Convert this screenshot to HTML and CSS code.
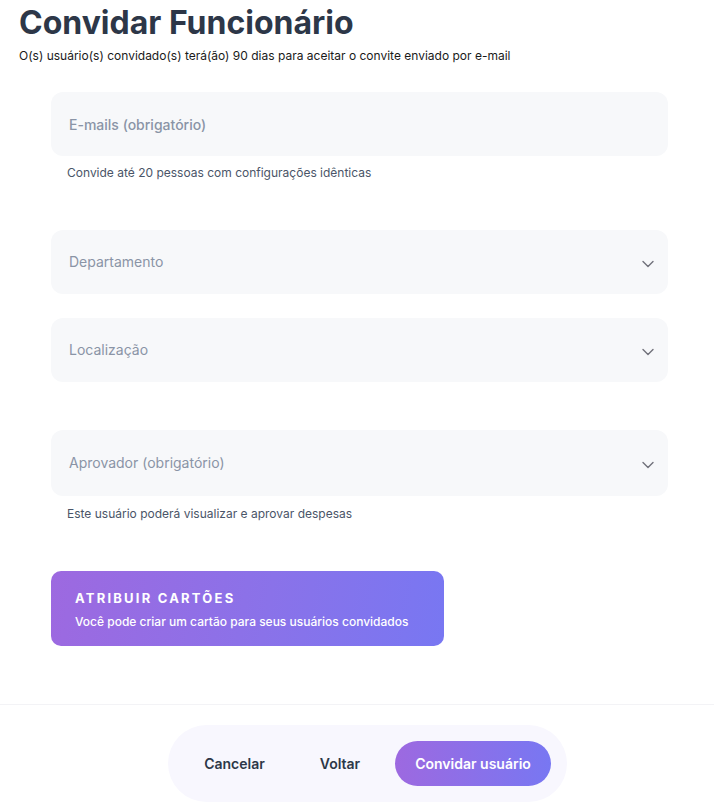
FILE: index.html
```html
<!DOCTYPE html>
<html lang="pt-BR">
<head>
    <meta charset="UTF-8">
    <title>Convidar Funcionário</title>
    <link rel="stylesheet" href="styles.css">
</head>
<body>
    <div class="page">
        <h1 class="title">Convidar Funcionário</h1>
        <p class="subtitle">O(s) usuário(s) convidado(s) terá(ão) 90 dias para aceitar o convite enviado por e-mail</p>

        <form class="form">
            <div class="group emails">
                <div class="field">
                    <span class="placeholder strong">E-mails (obrigatório)</span>
                </div>
                <p class="hint">Convide até 20 pessoas com configurações idênticas</p>
            </div>

            <div class="group selects">
                <div class="field select">
                    <span class="placeholder">Departamento</span>
                    <svg class="chevron" viewBox="0 0 20 20" width="20" height="20"><path d="M5 7.5l5 5 5-5" fill="none" stroke="#71717a" stroke-width="1.4" stroke-linecap="round" stroke-linejoin="round"/></svg>
                </div>
                <div class="field select">
                    <span class="placeholder">Localização</span>
                    <svg class="chevron" viewBox="0 0 20 20" width="20" height="20"><path d="M5 7.5l5 5 5-5" fill="none" stroke="#71717a" stroke-width="1.4" stroke-linecap="round" stroke-linejoin="round"/></svg>
                </div>
            </div>

            <div class="group approver">
                <div class="field select tall">
                    <span class="placeholder">Aprovador (obrigatório)</span>
                    <svg class="chevron" viewBox="0 0 20 20" width="20" height="20"><path d="M5 7.5l5 5 5-5" fill="none" stroke="#71717a" stroke-width="1.4" stroke-linecap="round" stroke-linejoin="round"/></svg>
                </div>
                <p class="hint">Este usuário poderá visualizar e aprovar despesas</p>
            </div>

            <div class="cards-banner">
                <div class="cards-title">Atribuir cartões</div>
                <div class="cards-text">Você pode criar um cartão para seus usuários convidados</div>
            </div>
        </form>
    </div>

    <footer class="footer">
        <div class="actions">
            <button class="btn" type="button">Cancelar</button>
            <button class="btn" type="button">Voltar</button>
            <button class="btn primary" type="button">Convidar usuário</button>
        </div>
    </footer>
</body>
</html>
```

FILE: styles.css
```css
body {
    margin: 0;
    font-family: Inter, "Noto Sans", sans-serif;
    background: #fff;
    color: #2d3748;
}
.page {
    padding: 4px 19px 0;
}
.title {
    margin: 0;
    font-size: 32px;
    line-height: 38px;
    font-weight: 700;
    color: #2d3748;
}
.subtitle {
    margin: 6px 0 0;
    font-size: 12px;
    line-height: 16px;
    color: #1a1a1a;
}
.form {
    width: 617px;
    margin: 28px 0 0 32px;
}
.field {
    display: flex;
    align-items: center;
    justify-content: space-between;
    height: 64px;
    padding: 0 10px 0 18px;
    box-sizing: border-box;
    background: #f7f8fa;
    border-radius: 12px;
}
.field.tall {
    height: 66px;
}
.placeholder {
    font-size: 14px;
    color: #8a94a6;
}
.select .placeholder {
    margin-top: -2px;
}
.placeholder.strong {
    font-weight: 500;
}
.chevron {
    margin-top: 3px;
}
.hint {
    margin: 9px 0 0 16px;
    font-size: 12px;
    line-height: 16px;
    color: #4a5568;
}
.selects {
    display: flex;
    flex-direction: column;
    gap: 24px;
    margin-top: 49px;
}
.approver {
    margin-top: 48px;
}
.approver .hint {
    margin-top: 10px;
}
.cards-banner {
    width: 393px;
    height: 75px;
    margin-top: 49px;
    padding: 19px 24px 0;
    box-sizing: border-box;
    border-radius: 10px;
    background: linear-gradient(100deg, #9d69e0 0%, #8a72e9 55%, #7877f2 100%);
    color: #fff;
}
.cards-title {
    font-size: 13px;
    line-height: 16px;
    font-weight: 700;
    letter-spacing: 0.17em;
    text-transform: uppercase;
}
.cards-text {
    margin-top: 8px;
    font-size: 12px;
    line-height: 16px;
    font-weight: 500;
}
.footer {
    margin-top: 58px;
    border-top: 1px solid #f3f3f6;
    padding: 20px 0 0 21px;
    display: flex;
    justify-content: center;
}
.actions {
    display: flex;
    align-items: center;
    gap: 15px;
    padding: 16px;
    background: #f8f7fe;
    border-radius: 40px;
}
.btn {
    font-family: inherit;
    font-size: 14px;
    font-weight: 600;
    color: #2d3748;
    background: none;
    border: 0;
    height: 45px;
    padding: 0 20px;
    border-radius: 23px;
    cursor: pointer;
}
.btn.primary {
    color: #fff;
    background: linear-gradient(90deg, #9d69e0 0%, #7877f2 100%);
}
```
